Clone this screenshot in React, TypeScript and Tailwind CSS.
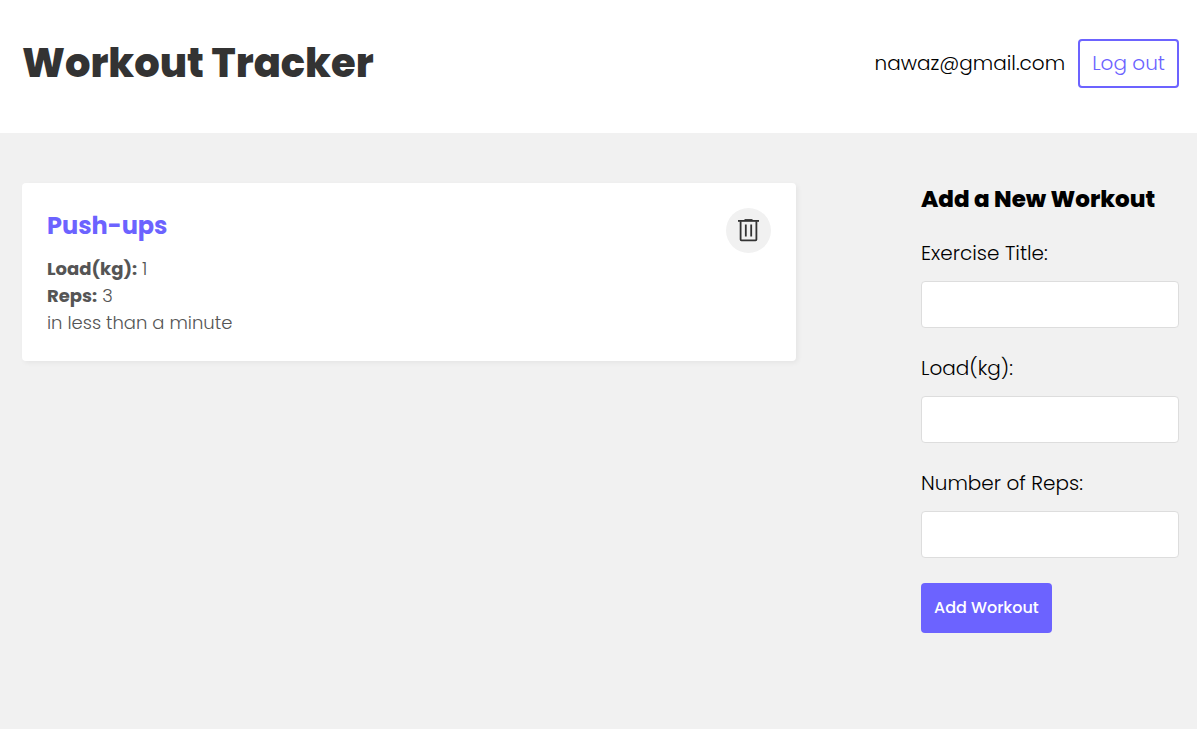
import { useId } from "react";

function TrashIcon() {
  return (
    <svg width="21" height="23" viewBox="0 0 21 23" fill="none" stroke="#333" aria-hidden="true">
      <path d="M6.5 .8h8" strokeWidth="1.4" />
      <path d="M0 1.9h21" strokeWidth="1.8" />
      <path d="M2.6 2.2v18.4q0 .8.8.8h14.2q.8 0 .8-.8V2.2" strokeWidth="1.8" />
      <path d="M7.8 5.5v12M13.2 5.5v12" strokeWidth="1.8" />
    </svg>
  );
}

function Field({ label, type }: { label: string; type: string }) {
  const id = useId();
  return (
    <div className="mb-[25px]">
      <label htmlFor={id} className="mb-3 block text-xl leading-[31px] font-light">
        {label}
      </label>
      <input
        id={id}
        type={type}
        className="block h-[47px] w-full rounded border border-[#ddd] bg-white px-2.5 text-base"
      />
    </div>
  );
}

function WorkoutCard() {
  return (
    <article className="flex items-start justify-between rounded bg-white p-[25px] text-[#555] shadow-[2px_2px_5px_rgba(0,0,0,0.05)]">
      <div className="text-lg leading-[27px] font-light">
        <h2 className="mb-[11px] text-2xl leading-9 font-bold text-[#6c63ff]">Push-ups</h2>
        <p>
          <strong className="font-bold">Load(kg):</strong> 1
        </p>
        <p>
          <strong className="font-bold">Reps:</strong> 3
        </p>
        <p>in less than a minute</p>
      </div>
      <button
        type="button"
        aria-label="Delete workout"
        className="flex size-[45px] shrink-0 cursor-pointer items-center justify-center rounded-full bg-[#f1f1f1]"
      >
        <TrashIcon />
      </button>
    </article>
  );
}

export default function App() {
  return (
    <div className="min-h-screen bg-[#f1f1f1] font-['Poppins',Inter,sans-serif] text-black">
      <header className="bg-white pt-[33px] pr-[18px] pb-10 pl-[22px]">
        <div className="flex items-center justify-between">
          <h1 className="text-[40px] leading-[60px] font-extrabold text-[#333]">
            <a href="#">Workout Tracker</a>
          </h1>
          <nav className="flex items-center gap-[13px]">
            <span className="text-xl leading-[30px] font-light">nawaz@gmail.com</span>
            <button
              type="button"
              className="h-[49px] cursor-pointer rounded border-2 border-[#6c63ff] bg-white px-3 text-xl font-light text-[#6c63ff]"
            >
              Log out
            </button>
          </nav>
        </div>
      </header>
      <main className="grid grid-cols-[3fr_1fr] items-start gap-[125px] pt-[50px] pr-[18px] pb-10 pl-[22px]">
        <WorkoutCard />
        <form onSubmit={(e) => e.preventDefault()}>
          <h3 className="mb-[23px] text-[23px] leading-8 font-extrabold whitespace-nowrap">Add a New Workout</h3>
          <Field label="Exercise Title:" type="text" />
          <Field label="Load(kg):" type="number" />
          <Field label="Number of Reps:" type="number" />
          <button
            type="submit"
            className="h-[50px] cursor-pointer rounded bg-[#6c63ff] px-[13px] text-base font-medium text-white"
          >
            Add Workout
          </button>
        </form>
      </main>
    </div>
  );
}
